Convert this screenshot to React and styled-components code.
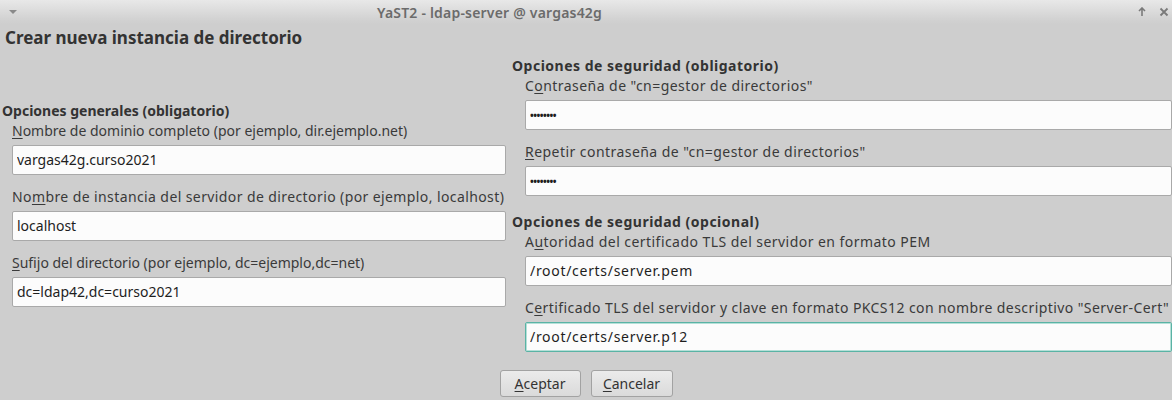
import React from 'react';
import styled, { createGlobalStyle } from 'styled-components';

const GlobalStyle = createGlobalStyle`
	html, body {
		margin: 0;
		padding: 0;
		background: #cecece;
	}
	body {
		font-family: 'Noto Sans', 'DejaVu Sans', sans-serif;
		color: #2e2e2e;
	}
`;

const Window = styled.div`
	width: 1172px;
	height: 400px;
	background: #cecece;
	display: flex;
	flex-direction: column;
	overflow: hidden;
`;

const TitleBar = styled.div`
	height: 24px;
	flex-shrink: 0;
	display: flex;
	align-items: center;
	justify-content: space-between;
	padding: 0 3px 0 8px;
	background: linear-gradient(#e8e8e8, #d2d2d2 80%, #cecece);
	color: #6b6b6b;
	font-size: 14px;
	font-weight: 600;
`;

const TitleText = styled.div`
	flex: 1;
	text-align: center;
	padding-right: 176px;
	padding-top: 1px;
	letter-spacing: 0.2px;
`;

const TitleButtons = styled.div`
	display: flex;
	gap: 12px;
	align-items: center;
`;

const Heading = styled.h1`
	margin: 3px 0 0 5px;
	font-size: 17px;
	font-weight: 700;
	line-height: 22px;
	color: #333;
`;

const Columns = styled.div`
	display: flex;
	align-items: center;
	margin-top: 7px;
`;

const Column = styled.div`
	width: ${(p) => p.$width}px;
	padding-left: ${(p) => p.$pad}px;
	box-sizing: border-box;
	flex-shrink: 0;
`;

const SectionTitle = styled.div`
	font-size: 14px;
	font-weight: 700;
	line-height: 20px;
	color: #333;
	letter-spacing: ${(p) => p.$spacing || 0}px;
	margin-top: ${(p) => (p.$spaced ? 16 : 0)}px;
`;

const Fields = styled.div`
	display: flex;
	flex-direction: column;
	gap: 12px;
	padding-left: ${(p) => p.$indent}px;
`;

const Field = styled.div`
	display: flex;
	flex-direction: column;
`;

const Label = styled.label`
	font-size: 14px;
	line-height: 20px;
	color: #3a3a3a;
	margin-bottom: 4px;
	white-space: nowrap;
	letter-spacing: ${(p) => p.$spacing || 0}px;
	u {
		text-decoration-thickness: 1px;
		text-underline-offset: 2px;
	}
`;

const Input = styled.input`
	box-sizing: border-box;
	height: 30px;
	width: 100%;
	margin: 0;
	padding: 0 4px 1px;
	border: 1px solid ${(p) => (p.$focused ? '#5ab3a5' : '#a9a9a9')};
	box-shadow: ${(p) => (p.$focused ? 'inset 0 0 0 1px #b5e0d8' : 'none')};
	border-radius: 2px;
	background: #fcfcfc;
	font-family: 'Noto Sans', 'DejaVu Sans', sans-serif;
	font-size: ${(p) => (p.$dots ? 10 : 14)}px;
	font-weight: ${(p) => (p.$dots ? 700 : 400)};
	letter-spacing: ${(p) => (p.$dots ? -0.5 : p.$spacing || 0)}px;
	color: #1e1e1e;
	outline: none;
`;

const ButtonRow = styled.div`
	display: flex;
	justify-content: center;
	gap: 10px;
	margin-top: 18px;
`;

const Button = styled.button`
	box-sizing: border-box;
	width: ${(p) => p.$width}px;
	height: 27px;
	padding: 0;
	border: 1px solid #a2a2a2;
	border-radius: 3px;
	background: linear-gradient(#ebebeb, #dadada);
	font-family: 'Noto Sans', 'DejaVu Sans', sans-serif;
	font-size: 14px;
	color: #333;
	u {
		text-underline-offset: 2px;
	}
`;

const leftFields = [
	{ pre: '', key: 'N', post: 'ombre de dominio completo (por ejemplo, dir.ejemplo.net)', value: 'vargas42g.curso2021' },
	{
		pre: 'No',
		key: 'm',
		post: 'bre de instancia del servidor de directorio (por ejemplo, localhost)',
		value: 'localhost',
		spacing: 0.4,
	},
	{ pre: '', key: 'S', post: 'ufijo del directorio (por ejemplo, dc=ejemplo,dc=net)', value: 'dc=ldap42,dc=curso2021' },
];

const requiredSecurity = [
	{ pre: 'C', key: 'o', post: 'ntraseña de "cn=gestor de directorios"', value: '••••••••', dots: true, spacing: 0.45 },
	{ pre: '', key: 'R', post: 'epetir contraseña de "cn=gestor de directorios"', value: '••••••••', dots: true, spacing: 0.45 },
];

const optionalSecurity = [
	{
		pre: 'A',
		key: 'u',
		post: 'toridad del certificado TLS del servidor en formato PEM',
		value: '/root/certs/server.pem',
		spacing: 0.45,
		valueSpacing: 0.7,
	},
	{
		pre: 'C',
		key: 'e',
		post: 'rtificado TLS del servidor y clave en formato PKCS12 con nombre descriptivo "Server-Cert"',
		value: '/root/certs/server.p12',
		focused: true,
		spacing: 0.42,
		valueSpacing: 0.7,
	},
];

const renderFields = (list) =>
	list.map((f) => (
		<Field key={f.post}>
			<Label $spacing={f.spacing}>
				{f.pre}
				<u>{f.key}</u>
				{f.post}
			</Label>
			<Input
				type="text"
				readOnly
				value={f.value}
				$dots={f.dots}
				$focused={f.focused}
				$spacing={f.valueSpacing}
			/>
		</Field>
	));

const App = () => {
	return (
		<>
			<GlobalStyle />
			<Window>
				<TitleBar>
					<svg width="10" height="10" viewBox="0 0 10 10">
						<path d="M1 3 L9 3 L5 7 Z" fill="#8a8a8a" />
					</svg>
					<TitleText>YaST2 - ldap-server @ vargas42g</TitleText>
					<TitleButtons>
						<svg width="10" height="10" viewBox="0 0 10 10">
							<path d="M5 1 L5 9 M2 4 L5 1 L8 4" stroke="#7a7a7a" strokeWidth="1.6" fill="none" />
						</svg>
						<svg width="10" height="10" viewBox="0 0 10 10">
							<path d="M1.5 1.5 L8.5 8.5 M8.5 1.5 L1.5 8.5" stroke="#7a7a7a" strokeWidth="1.8" fill="none" />
						</svg>
					</TitleButtons>
				</TitleBar>
				<Heading>Crear nueva instancia de directorio</Heading>
				<Columns>
					<Column $width={506} $pad={2}>
						<SectionTitle>Opciones generales (obligatorio)</SectionTitle>
						<Fields $indent={10}>{renderFields(leftFields)}</Fields>
					</Column>
					<Column $width={666} $pad={6}>
						<SectionTitle $spacing={0.5}>Opciones de seguridad (obligatorio)</SectionTitle>
						<Fields $indent={13}>{renderFields(requiredSecurity)}</Fields>
						<SectionTitle $spaced $spacing={0.5}>
							Opciones de seguridad (opcional)
						</SectionTitle>
						<Fields $indent={13}>{renderFields(optionalSecurity)}</Fields>
					</Column>
				</Columns>
				<ButtonRow>
					<Button $width={81}>
						<u>A</u>ceptar
					</Button>
					<Button $width={82}>
						<u>C</u>ancelar
					</Button>
				</ButtonRow>
			</Window>
		</>
	);
};

export default App;
